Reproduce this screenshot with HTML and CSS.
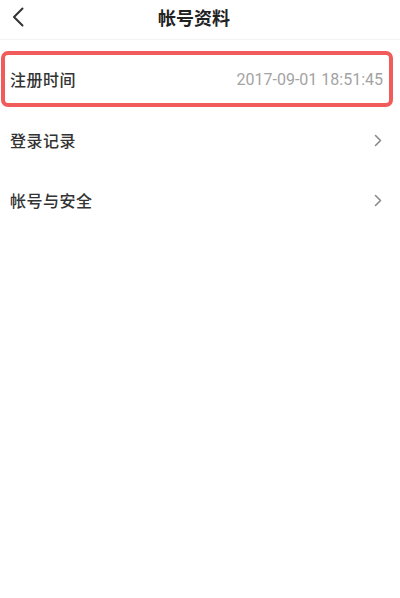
FILE: index.html
```html
<!DOCTYPE html>
<html lang="zh-CN">
  <head>
    <meta charset="UTF-8" />
    <meta name="viewport" content="width=device-width, initial-scale=1.0" />
    <title>帐号资料</title>
    <link rel="stylesheet" href="styles.css">
  </head>
  <body>
    <div class="header">
      <div class="back">
        <svg width="12" height="20" viewBox="0 0 12 20">
          <path d="M10.5 1.5 L2 10 L10.5 18.5" fill="none" stroke="#333" stroke-width="2" stroke-linecap="round" stroke-linejoin="round" />
        </svg>
      </div>
      <div class="title">帐号资料</div>
    </div>

    <div class="list">
      <div class="row highlight">
        <span class="label">注册时间</span>
        <span class="value">2017-09-01 18:51:45</span>
      </div>
      <div class="row">
        <span class="label">登录记录</span>
        <svg class="arrow" width="8" height="13" viewBox="0 0 8 13">
          <path d="M1.5 1.5 L6.5 6.5 L1.5 11.5" fill="none" stroke="#8a8a8a" stroke-width="1.6" stroke-linecap="round" stroke-linejoin="round" />
        </svg>
      </div>
      <div class="row">
        <span class="label">帐号与安全</span>
        <svg class="arrow" width="8" height="13" viewBox="0 0 8 13">
          <path d="M1.5 1.5 L6.5 6.5 L1.5 11.5" fill="none" stroke="#8a8a8a" stroke-width="1.6" stroke-linecap="round" stroke-linejoin="round" />
        </svg>
      </div>
    </div>
  </body>
</html>
```

FILE: styles.css
```css
body {
  margin: 0;
  background-color: #fff;
  font-family: "Noto Sans CJK SC", "Noto Sans", sans-serif;
  color: #333;
}

.header {
  position: relative;
  height: 40px;
  display: flex;
  align-items: center;
  justify-content: center;
  border-bottom: 1px solid #f3f3f3;
  box-sizing: border-box;
}

.back {
  position: absolute;
  left: 12px;
  top: 7px;
  width: 12px;
  height: 20px;
}

.back svg {
  display: block;
}

.title {
  font-size: 18px;
  font-weight: bold;
  color: #222;
  margin-right: 12px;
  margin-top: -6px;
}

.list {
  padding-top: 11px;
}

.row {
  display: flex;
  align-items: center;
  justify-content: space-between;
  height: 60px;
  padding: 0 18px 0 10px;
  box-sizing: border-box;
}

.row .label {
  font-size: 16px;
  font-weight: 500;
  letter-spacing: 0.5px;
}

.highlight {
  height: 56px;
  margin: 0 7px 3px 1px;
  padding: 0 6px 0 5px;
  border: 4px solid #f25b5b;
  border-radius: 7px;
}

.value {
  font-family: Roboto, "Liberation Sans", sans-serif;
  font-size: 16px;
  color: #a3a3a3;
}

.arrow {
  display: block;
}
```
